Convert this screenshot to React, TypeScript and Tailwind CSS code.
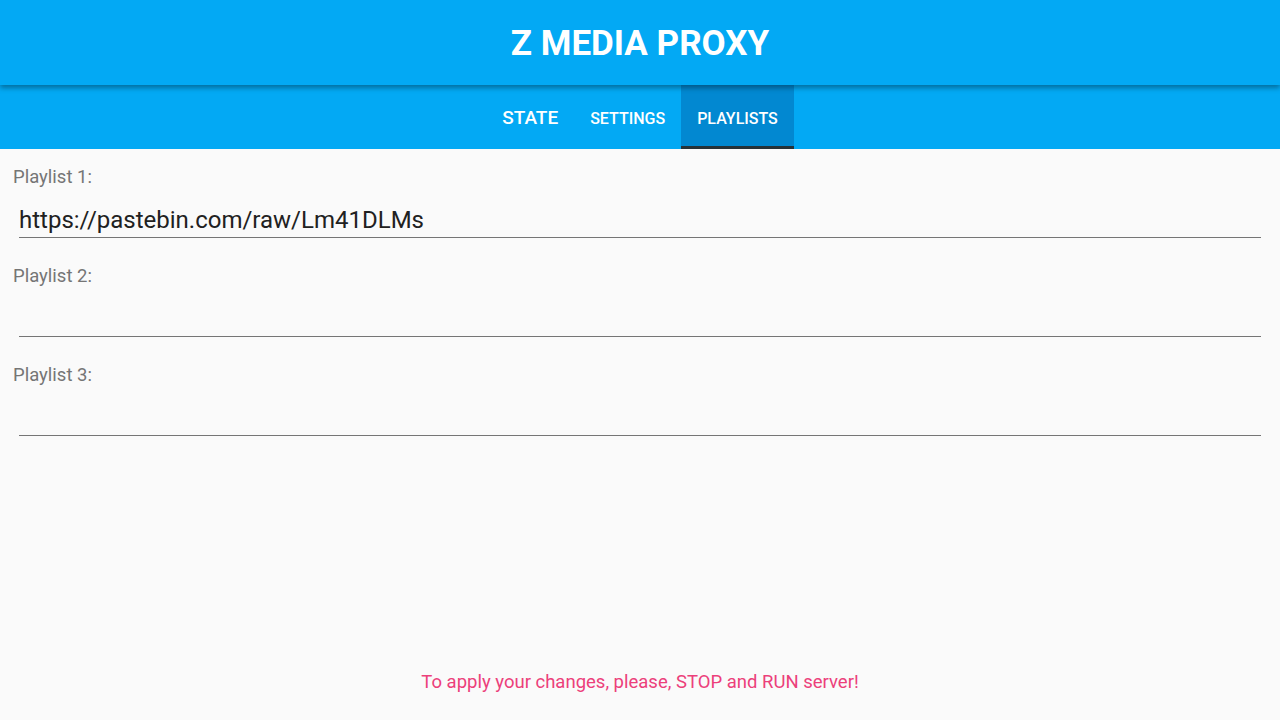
import React from 'react';

const tabs = [
  { label: 'STATE', big: true },
  { label: 'SETTINGS', big: false },
  { label: 'PLAYLISTS', big: false, active: true },
];

const playlists = ['https://pastebin.com/raw/Lm41DLMs', '', ''];

export default function App() {
  return (
    <div className="flex h-[720px] flex-col overflow-hidden bg-[#fafafa] font-['Roboto',sans-serif]">
      <header className="relative z-10 flex h-[85px] shrink-0 items-center justify-center bg-[#03a9f4] shadow-[0_3px_5px_rgba(0,0,0,0.35)]">
        <h1 className="pt-[1px] text-[35px] font-bold leading-none text-white">Z MEDIA PROXY</h1>
      </header>
      <nav className="flex h-[64px] shrink-0 justify-center bg-[#03a9f4]">
        {tabs.map((t) => (
          <div
            key={t.label}
            className={`flex items-center border-b-[3px] px-4 pt-[6px] font-medium text-white ${
              t.active ? 'border-[#263238] bg-[#0288d1]' : 'border-transparent'
            } ${t.big ? 'text-[19px]' : 'text-[16px]'}`}
          >
            {t.label}
          </div>
        ))}
      </nav>
      <main className="flex-1 px-[13px] pt-[15px]">
        {playlists.map((value, i) => (
          <div key={i} className="mb-[25px]">
            <div className="h-6 pt-[1px] text-[18.5px] leading-6 text-[#757575]">Playlist {i + 1}:</div>
            <div className="mx-[6px] mt-[9px] flex h-[41px] items-end border-b border-[#757575] pb-[3px]">
              <span className="text-[24px] leading-7 text-[#212121]">{value}</span>
            </div>
          </div>
        ))}
      </main>
      <footer className="pb-[26px] text-center text-[18.5px] leading-6 text-[#ec407a]">
        To apply your changes, please, STOP and RUN server!
      </footer>
    </div>
  );
}
